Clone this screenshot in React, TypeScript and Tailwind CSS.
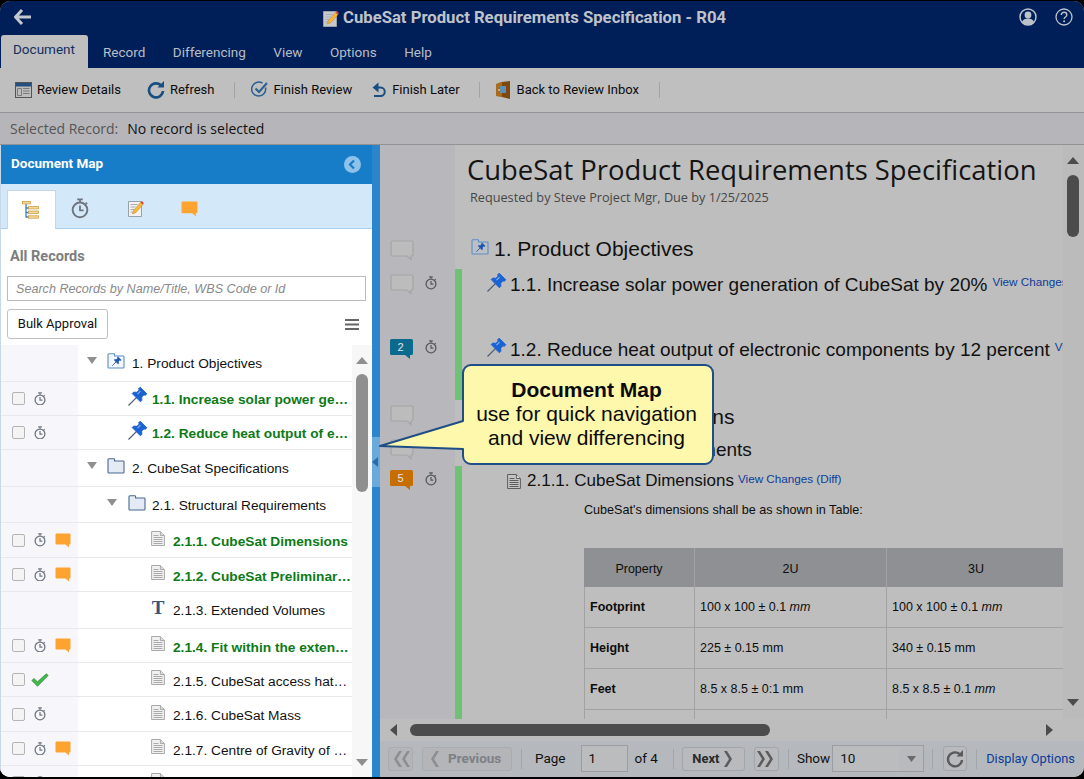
import React from "react";

const sans = "font-['Liberation_Sans',Arial,sans-serif]";
const rob = "font-['Roboto',Arial,sans-serif]";
const open = "font-['Open_Sans','Noto_Sans',sans-serif]";

function Timer({ c = "#6f7680", s = 12 }: { c?: string; s?: number }) {
  return (
    <svg width={s} height={s * 15 / 13} viewBox="0 0 13 15" fill="none" className="shrink-0 block">
      <path d="M4.500 1h4M6.500 1v2M10.600 3.400l1 1" stroke={c} strokeWidth="1.300" />
      <circle cx="6.500" cy="8.600" r="5.300" stroke={c} strokeWidth="1.400" />
      <path d="M6.500 5.500v3.400h2.600" stroke={c} strokeWidth="1.300" />
    </svg>
  );
}
function Orange({ s = 16 }: { s?: number }) {
  return (
    <svg width={s} height={s * 15 / 16} viewBox="0 0 16 15" className="shrink-0 block">
      <path d="M1.500 0.500h13a1 1 0 0 1 1 1v9a1 1 0 0 1-1 1H14v3l-3.500-3H1.500a1 1 0 0 1-1-1v-9a1 1 0 0 1 1-1z" fill="#fda330" />
    </svg>
  );
}
function Pin({ s = 18 }: { s?: number }) {
  return (
    <svg width={s} height={s} viewBox="0 0 18 18" className="shrink-0 block overflow-visible">
      <g transform="translate(9.500 8.500) rotate(45) scale(.85)">
        <path d="M0 1v14" stroke="#4c5c70" strokeWidth="1.400" />
        <path d="M-5.500 -10h11v3H4v4l2.800 2.500V2H-6.800V-.5L-4 -3V-7h-1.500z" fill="#1b62d2" strokeLinejoin="round" stroke="#1b62d2" strokeWidth="1" />
        <path d="M-2 -7v5" stroke="#7fb2f2" strokeWidth="1.400" />
      </g>
    </svg>
  );
}
function Folder({ pin = false, dark = false }: { pin?: boolean; dark?: boolean }) {
  return (
    <svg width="18" height="16" viewBox="0 0 18 16" className="shrink-0 block">
      <path d="M1 3.500V1.600a.8.8 0 0 1 .8-.8h5a.8.8 0 0 1 .8.800v1.400H16.200a.8.8 0 0 1 .8.800v10.400a.8.8 0 0 1-.8.800H1.800a.8.8 0 0 1-.8-.8z" fill={pin ? (dark ? "#bcc0c6" : "#f3f7fc") : "#e4ebf4"} stroke={pin ? "#5b8dc6" : "#48688f"} strokeWidth="1.100" />
      {pin && (
        <g transform="translate(9.500 8.500) rotate(45) scale(.5)">
          <path d="M0 1v11" stroke="#1d55ac" strokeWidth="1.600" />
          <path d="M-5 -9h10v2.500H3.200v3.500l2.800 2.500v2H-6v-2l2.800-2.500v-3.500H-5z" fill="#1d55ac" />
        </g>
      )}
    </svg>
  );
}
function Doc({ dark = false }: { dark?: boolean }) {
  const l = dark ? "#5d5d5d" : "#a9a9a9";
  return (
    <svg width="14" height="15" viewBox="0 0 14 15" className="shrink-0 block">
      <path d="M0.600 0.500h8.800l4 4v10h-12.800z" fill={dark ? "#c4c4c4" : "#f1f1f1"} stroke={l} />
      <path d="M9.400 .500v4h4" fill="#ddd" stroke={l} />
      <path d="M2.500 4.500h5M2.500 6.500h9M2.500 8.500h9M2.500 10.500h9M2.500 12.500h9" stroke={l} />
    </svg>
  );
}
function Check() {
  return (
    <svg width="18" height="14" viewBox="0 0 18 14" className="shrink-0 block">
      <path d="M0.800 7.500L3 5.500l3.400 3.300L15.300 .8 17.200 2.500 6.500 13.300z" fill="#45b84b" stroke="#2c8a36" strokeWidth="0.700" />
    </svg>
  );
}
function TreeIcon() {
  return (
    <svg width="17" height="18" viewBox="0 0 17 18" className="block">
      <path d="M4 3v13.500M4 7h3M4 11.500h3M4 16h3" stroke="#2e7fd0" strokeWidth="1.300" fill="none" />
      <rect x="0.500" y="0.500" width="8" height="2.400" fill="#f4d79a" stroke="#d0a04a" strokeWidth=".8" />
      <rect x="6.500" y="5.500" width="10" height="2.400" fill="#f4d79a" stroke="#d0a04a" strokeWidth=".8" />
      <rect x="6.500" y="10" width="10" height="2.400" fill="#f4d79a" stroke="#d0a04a" strokeWidth=".8" />
      <rect x="6.500" y="14.800" width="10" height="2.400" fill="#f4d79a" stroke="#d0a04a" strokeWidth=".8" />
    </svg>
  );
}
function NoteIcon({ s = 16, dim = false }: { s?: number; dim?: boolean }) {
  return (
    <svg width={s} height={s * 17 / 16} viewBox="0 0 16 17" className="block">
      <path d="M.500 1.500h13v15h-13z" fill={dim ? "#c9c9c9" : "#f2f2f2"} stroke="#98a0a8" />
      <path d="M2.500 4.500h7M2.500 7h5M2.500 9.500h4M2.500 12h3" stroke="#aab" />
      <path d="M4.500 14l1-3.500 7-8 2.500 2-7 8z" fill="#f4b93a" stroke="#c08020" strokeWidth="0.500" />
      <path d="M12.500 2.500l2.500 2 .8-1.500-1.800-2z" fill="#d64545" />
    </svg>
  );
}
function TriDown() {
  return <svg width="10" height="7" viewBox="0 0 10 7" className="shrink-0 block"><path d="M0 0h10L5 7z" fill="#8f8f8f" /></svg>;
}
function Bubble({ n, bg }: { n?: string; bg?: string }) {
  if (!n)
    return (
      <svg width="24" height="21" viewBox="0 0 24 21" fill="none" className="shrink-0 block">
        <path d="M2.500 1h19a1.500 1.500 0 0 1 1.500 1.500v12a1.500 1.500 0 0 1-1.500 1.500H21v3.500L17 16H2.500A1.500 1.500 0 0 1 1 14.500v-12A1.500 1.500 0 0 1 2.500 1z" stroke="#a4a4a4" strokeWidth="1.200" fill="#bcbcbc" />
      </svg>
    );
  return (
    <div className="relative w-[23px] h-[20px] shrink-0">
      <svg width="23" height="20" viewBox="0 0 23 20" className="block">
        <path d="M1.500 0h20a1.500 1.500 0 0 1 1.500 1.500v13a1.500 1.500 0 0 1-1.500 1.500H20v4l-5-4H1.500A1.500 1.500 0 0 1 0 14.500v-13A1.500 1.500 0 0 1 1.500 0z" fill={bg} />
      </svg>
      <span className={`absolute left-0 right-[2px] top-[1px] text-center text-[11px] leading-[14px] text-[#e4e4e4] ${sans}`}>{n}</span>
    </div>
  );
}

type Row = { h: string; pad: string; tri?: string; icon: React.ReactNode; text: string; bold?: boolean; left?: React.ReactNode; chk?: boolean; gapc?: string; gap: string; tm?: string };
const cb = <span className="block w-[13px] h-[13px] rounded-[2px] border border-[#b4b4b4] bg-[#f4f4f4] shrink-0" />;
const T = <span className="block font-['Liberation_Serif',serif] font-bold text-[19px] leading-[16px] text-[#35557f] w-[14px] text-center shrink-0">T</span>;
const rows: Row[] = [
  { h: "h-[37px]", pad: "pl-[9px]", tri: "mr-[10px]", gap: "ml-[7px]", tm: "mt-[2px]", icon: <Folder pin />, text: "1. Product Objectives" },
  { h: "h-[34px]", pad: "pl-[50px]", gap: "ml-[6px]", tm: "mt-[4px]", icon: <Pin />, text: "1.1. Increase solar power generation of CubeSat by 20%", bold: true, chk: true },
  { h: "h-[34px]", pad: "pl-[50px]", gap: "ml-[6px]", tm: "mt-[4px]", icon: <Pin />, text: "1.2. Reduce heat output of electronic components", bold: true, chk: true },
  { h: "h-[37px]", pad: "pl-[9px]", tri: "mr-[10px]", gap: "ml-[7px]", tm: "mt-[2px]", icon: <Folder />, text: "2. CubeSat Specifications" },
  { h: "h-[36px]", pad: "pl-[29px]", tri: "mr-[11px]", gap: "ml-[6px]", tm: "mt-[4px]", icon: <Folder />, text: "2.1. Structural Requirements" },
  { h: "h-[35px]", pad: "pl-[73px]", gap: "ml-[8px]", tm: "mt-[4px]", icon: <Doc />, text: "2.1.1. CubeSat Dimensions", bold: true, chk: true, left: <Orange /> },
  { h: "h-[34px]", pad: "pl-[73px]", gap: "ml-[8px]", tm: "mt-[6px]", icon: <Doc />, text: "2.1.2. CubeSat Preliminary Design Review", bold: true, chk: true, left: <Orange /> },
  { h: "h-[37px]", pad: "pl-[73px]", gap: "ml-[8px]", tm: "mt-[2px]", icon: T, text: "2.1.3. Extended Volumes" },
  { h: "h-[34px]", pad: "pl-[73px]", gap: "ml-[8px]", tm: "mt-[6px]", icon: <Doc />, text: "2.1.4. Fit within the extended volumes", bold: true, chk: true, left: <Orange /> },
  { h: "h-[34px]", pad: "pl-[73px]", gap: "ml-[8px]", tm: "mt-[6px]", icon: <Doc />, text: "2.1.5. CubeSat access hatch design", chk: true, gapc: "check" },
  { h: "h-[35px]", pad: "pl-[73px]", gap: "ml-[8px]", tm: "mt-[4px]", icon: <Doc />, text: "2.1.6. CubeSat Mass", chk: true },
  { h: "h-[34px]", pad: "pl-[73px]", gap: "ml-[8px]", tm: "mt-[6px]", icon: <Doc />, text: "2.1.7. Centre of Gravity of CubeSat", chk: true, left: <Orange /> },
  { h: "h-[34px]", pad: "pl-[73px]", gap: "ml-[8px]", tm: "mt-[4px]", icon: <Doc />, text: "2.1.8. Materials", chk: true },
];

function Sep() {
  return <span className="block w-px h-[16px] bg-[#a3a3a3] shrink-0" />;
}
function Bsep() {
  return <span className="block w-px h-[20px] bg-[#a2a5a9] shrink-0" />;
}

function Chev({ dbl = false, dir = "l", c }: { dbl?: boolean; dir?: string; c: string }) {
  const one = dir === "l" ? "M7 1L2 9l5 8h3L5 9l5-8z" : "M3 1l5 8-5 8H0l5-8-5-8z";
  return (
    <svg width={dbl ? 18 : 10} height="18" viewBox={`0 0 ${dbl ? 18 : 10} 18`} className="block shrink-0">
      <path d={one} fill={c} />
      {dbl && <path d={one} fill={c} transform="translate(8 0)" />}
    </svg>
  );
}

const cellB = "border-r border-b border-[#a2a2a2]";
const tbl: [string, React.ReactNode, React.ReactNode][] = [
  ["Footprint", <span>100 x 100 ± 0.1 <i>mm</i></span>, <span>100 x 100 ± 0.1 <i>mm</i></span>],
  ["Height", "225 ± 0.15 mm", "340 ± 0.15 mm"],
  ["Feet", "8.5 x 8.5 ± 0:1 mm", <span>8.5 x 8.5 ± 0.1 <i>mm</i></span>],
];

function Gut({ b, t = false, pt = "pt-[5px]", tm = "mt-[2px]" }: { b?: React.ReactNode; t?: boolean; pt?: string; tm?: string }) {
  return (
    <div className={`w-[75px] shrink-0 bg-[#b8b7bc] flex items-start ${pt} pl-[10px]`}>
      <div className="w-[23px]">{b}</div>
      {t && <div className={`ml-[12px] ${tm}`}><Timer c="#555a60" /></div>}
    </div>
  );
}

export default function App() {
  return (
    <div className={`w-[1084px] h-[779px] bg-black overflow-hidden relative ${sans}`}>
      <div className="mt-px h-[776px] rounded-[10px] overflow-hidden flex flex-col bg-[#bebebe] relative">
        {/* header */}
        <div className="h-[67px] bg-[#001f59] shrink-0 flex flex-col">
          <div className="h-[34px] flex items-center relative">
            <svg width="18" height="16" viewBox="0 0 18 16" className="ml-[14px] -mt-[2px]">
              <path d="M8 1L1.500 8 8 15M2 8h15" stroke="#c4c8ce" strokeWidth="3" fill="none" />
            </svg>
            <div className={`absolute left-[323px] top-[8px] flex items-center gap-[4px] text-[16.700px] font-bold text-[#bfc3c9] ${rob}`}>
              <NoteIcon dim />
              <span className="leading-[18px] whitespace-nowrap">CubeSat Product Requirements Specification - R04</span>
            </div>
            <div className="ml-auto flex items-center gap-[18px] pr-[11px] -mt-[3px]">
              <svg width="18" height="18" viewBox="0 0 18 18">
                <circle cx="9" cy="9" r="8" fill="#001f59" stroke="#bcc2c9" strokeWidth="1.500" />
                <circle cx="9" cy="7" r="3.400" fill="#bcc2c9" />
                <path d="M2.800 14c1.200-2.500 3.500-3.500 6.200-3.500s5 1 6.200 3.500a8 8 0 0 1-12.400 0z" fill="#bcc2c9" />
              </svg>
              <svg width="18" height="18" viewBox="0 0 18 18" fill="none">
                <circle cx="9" cy="9" r="8" stroke="#bcc2c9" strokeWidth="1.300" />
                <path d="M6.300 7c0-1.700 1.200-2.700 2.800-2.700S11.800 5.300 11.800 6.900c0 2-2.700 2.100-2.700 4.100" stroke="#bcc2c9" strokeWidth="1.400" />
                <circle cx="9.100" cy="13.200" r="1" fill="#bcc2c9" />
              </svg>
            </div>
          </div>
          <div className={`h-[33px] flex items-stretch text-[13.500px] text-[#b9bdc4] ${rob}`}>
            <div className="ml-px w-[87px] bg-[#bfbfbf] rounded-t-[3px] text-[#12305f] flex items-center pl-[12px] pb-[4px]">Document</div>
            <div className="flex items-center gap-[27.500px] pl-[15px] pt-[1px]">
              <span>Record</span><span>Differencing</span><span>View</span><span>Options</span><span>Help</span>
            </div>
          </div>
        </div>
        {/* toolbar */}
        <div className={`h-[45px] shrink-0 bg-[#bfbfbf] border-b border-[#929292] flex items-center text-[13px] text-[#0b0b0b] pl-[15px] pb-[1px] ${rob}`}>
          <svg width="17" height="16" viewBox="0 0 17 16" className="mr-[5px]">
            <rect x=".5" y=".5" width="16" height="15" fill="#bdbdbd" stroke="#555" />
            <rect x="1" y="1" width="15" height="3.500" fill="#27507f" />
            <path d="M2.500 6.500h4v7h-4zM8 6.500h6.500M8 9h6.500M8 11.500h6.500" stroke="#7a7a7a" fill="none" />
          </svg>
          <span>Review Details</span>
          <svg width="18" height="18" viewBox="0 0 18 18" className="ml-[26px] mr-[5px]" fill="none">
            <path d="M14.500 5A7 7 0 1 0 16 10" stroke="#184e80" strokeWidth="2.600" />
            <path d="M10.500 6.500h6.500V0z" fill="#184e80" />
          </svg>
          <span>Refresh</span>
          <span className="ml-[20px] mr-[16px]"><Sep /></span>
          <svg width="17" height="17" viewBox="0 0 17 17" className="mr-[5px]" fill="none">
            <path d="M14.500 6.500A7 7 0 1 1 11.500 2.200" stroke="#2a5f93" strokeWidth="1.500" />
            <path d="M4.500 7.500l3.500 3.500 8-9" stroke="#2a5f93" strokeWidth="2" />
          </svg>
          <span>Finish Review</span>
          <svg width="14" height="16" viewBox="0 0 14 16" className="ml-[20px] mr-[6px]" fill="none">
            <path d="M2.500 5.500h6a4 4 0 0 1 0 8.500H2" stroke="#184e80" strokeWidth="2" />
            <path d="M6.500 0.500v10L0.500 5.500z" fill="#184e80" />
          </svg>
          <span>Finish Later</span>
          <span className="ml-[19px] mr-[16px]"><Sep /></span>
          <svg width="15" height="18" viewBox="0 0 15 18" className="mr-[6px]">
            <path d="M0 3l5-2h9v15H5l-5-1z" fill="#a96b1c" />
            <path d="M6 1l8-1v18l-8-2z" fill="#7c4a10" />
            <rect x="4" y="5" width="6" height="7" fill="#5f8fb8" />
            <circle cx="3" cy="9" r="1" fill="#e9c265" />
          </svg>
          <span>Back to Review Inbox</span>
          <span className="ml-[20px]"><Sep /></span>
        </div>
        {/* selected */}
        <div className={`h-[32px] shrink-0 bg-[#b6b5ba] border-b border-[#929292] flex items-center pl-[10px] text-[14px] ${open}`}>
          <span className="text-[#555]">Selected Record:</span>
          <span className="ml-[9px] text-[#111]">No record is selected</span>
        </div>
        {/* main */}
        <div className="flex-1 flex min-h-0">
          {/* left */}
          <div className="w-[372px] shrink-0 bg-white flex flex-col overflow-hidden border-l border-[#c8d8e6]">
            <div className={`h-[39px] shrink-0 bg-[#187dc9] flex items-center pl-[10px] pr-[11px] pb-[2px] text-white text-[13.500px] font-bold ${rob}`}>
              <span>Document Map</span>
              <svg width="17" height="17" viewBox="0 0 17 17" className="ml-auto mt-[2px]">
                <circle cx="8.500" cy="8.500" r="8.500" fill="#8fc2ea" />
                <path d="M10 4.500L6 8.500l4 4" stroke="#187dc9" strokeWidth="2.200" fill="none" />
              </svg>
            </div>
            <div className="h-[45px] shrink-0 bg-[#d3e8f8] border-b border-[#a9d0ec] flex items-end pl-[6px]">
              <div className="w-[49px] h-[39px] bg-white border border-b-0 border-[#c6d6e4] flex items-center justify-center pr-[3px] -mb-px"><TreeIcon /></div>
              <div className="w-[48px] h-[39px] flex items-center justify-center"><Timer s={18} /></div>
              <div className="w-[64px] h-[39px] flex items-center justify-center"><NoteIcon s={16} /></div>
              <div className="w-[42px] h-[39px] flex items-center justify-center"><Orange s={17} /></div>
            </div>
            <div className={`shrink-0 pl-[9px] mt-[20px] text-[14.500px] leading-[16px] font-bold text-[#7d7d7d] ${rob}`}>All Records</div>
            <div className="mx-[6px] mt-[11px] h-[25px] shrink-0 border border-[#bcbcbc] flex items-center pl-[8px] pt-[2px] italic text-[12.600px] text-[#8a8a8a]">
              Search Records by Name/Title, WBS Code or Id
            </div>
            <div className="mt-[8px] shrink-0 flex items-center pl-[6px] pr-[13px]">
              <div className={`h-[30px] w-[101px] border border-[#c0c0c0] rounded-[3px] flex items-center justify-center text-[13px] text-[#111] ${rob}`}>Bulk Approval</div>
              <svg width="14" height="11" viewBox="0 0 14 11" className="ml-auto"><path d="M0 1h14M0 5.500h14M0 10h14" stroke="#666" strokeWidth="1.800" /></svg>
            </div>
            <div className="mt-[6px] flex-1 flex min-h-0 overflow-hidden">
              <div className="flex-1 min-w-0">
                {rows.map((r, i) => (
                  <div key={i} className={`${r.h} flex`}>
                    <div className="w-[77px] shrink-0 bg-[#f6f6fb] border-b border-[#e9e9e9] flex items-center pl-[11px]">
                      {r.chk && cb}
                      {r.chk && (r.gapc === "check" ? <span className="ml-[6px]"><Check /></span> : <span className="ml-[9px]"><Timer /></span>)}
                      {r.left && <span className="ml-[9px]">{r.left}</span>}
                    </div>
                    <div className={`flex-1 min-w-0 border-b border-[#e9e9e9] flex items-center ${r.pad}`}>
                      {r.tri && <span className={`${r.tri} -mt-[5px]`}><TriDown /></span>}
                      <span className="-mt-[4px]">{r.icon}</span>
                      <span className={`truncate ${r.gap} ${r.tm ?? ""} ${r.bold ? "text-[13.700px] font-bold text-[#0d7a17]" : "text-[13.700px] text-[#111]"}`}>{r.text}</span>
                    </div>
                  </div>
                ))}
              </div>
              <div className="w-[20px] shrink-0 bg-[#f7f7f7] flex flex-col items-center relative">
                <svg width="12" height="7" viewBox="0 0 12 7" className="mt-[12px]"><path d="M0 7h12L6 0z" fill="#8f8f8f" /></svg>
                <div className="w-[12px] h-[118px] rounded-[6px] bg-[#8f8f8f] mt-[10px]" />
                <svg width="12" height="7" viewBox="0 0 12 7" className="mt-auto mb-[11px]"><path d="M0 0h12L6 7z" fill="#8f8f8f" /></svg>
              </div>
            </div>
          </div>
          {/* splitter */}
          <div className="w-[8px] shrink-0 bg-[#2a85cc] flex flex-col">
            <div className="mt-[292px] h-[50px] bg-[#69a9dc] flex items-center">
              <svg width="6" height="10" viewBox="0 0 6 10"><path d="M6 0v10L0 5z" fill="#2a6cab" /></svg>
            </div>
          </div>
          {/* right */}
          <div className="flex-1 min-w-0 flex flex-col">
            <div className="flex-1 min-h-0 flex">
              <div className="flex-1 min-w-0 overflow-hidden flex flex-col bg-[#bebebe]">
                <div className="h-[90px] shrink-0 flex">
                  <Gut />
                  <div className={`pl-[12px] pt-[8px] whitespace-nowrap ${open}`}>
                    <div className="text-[27.400px] leading-[34px] text-[#141414]">CubeSat Product Requirements Specification</div>
                    <div className="pl-[3px] text-[12.700px] leading-[20px] text-[#474747]">Requested by Steve Project Mgr, Due by 1/25/2025</div>
                  </div>
                </div>
                <div className="h-[34px] shrink-0 flex">
                  <Gut b={<Bubble />} />
                  <div className="pl-[16px] pt-[2px] flex items-start whitespace-nowrap text-[#111]">
                    <span className="mt-[2px]"><Folder pin dark /></span>
                    <span className="ml-[5px] text-[21px] leading-[24px]">1. Product Objectives</span>
                  </div>
                </div>
                <div className="h-[65px] shrink-0 flex">
                  <Gut b={<Bubble />} t />
                  <div className="w-[7px] shrink-0 bg-[#6fc175]" />
                  <div className="pl-[26px] pt-[5px] flex items-start whitespace-nowrap text-[#111]">
                    <span className="-ml-px"><Pin /></span>
                    <span className="ml-[5px] mt-[1px] text-[19px] leading-[20px]">1.1. Increase solar power generation of CubeSat by 20%</span>
                    <span className="ml-[5px] -mt-[1px] text-[11.700px] leading-[18px] text-[#0a3d99]">View Changes (Diff)</span>
                  </div>
                </div>
                <div className="h-[66px] shrink-0 flex">
                  <Gut b={<Bubble n="2" bg="#0c6a8e" />} t tm="mt-[1px]" />
                  <div className="w-[7px] shrink-0 bg-[#6fc175]" />
                  <div className="pl-[26px] pt-[5px] flex items-start whitespace-nowrap text-[#111]">
                    <span className="-ml-px"><Pin /></span>
                    <span className="ml-[5px] mt-[1px] text-[19px] leading-[20px]">1.2. Reduce heat output of electronic components by 12 percent</span>
                    <span className="ml-[5px] -mt-[1px] text-[11.700px] leading-[18px] text-[#0a3d99]">View Changes (Diff)</span>
                  </div>
                </div>
                <div className="h-[34px] shrink-0 flex">
                  <Gut b={<Bubble />} />
                  <div className="pl-[39px] pt-[5px] whitespace-nowrap text-[21px] leading-[24px] text-[#111]">2. CubeSat Specifications</div>
                </div>
                <div className="h-[32px] shrink-0 flex">
                  <Gut b={<Bubble />} />
                  <div className="pl-[55px] pt-[5px] whitespace-nowrap text-[19px] leading-[22px] text-[#111]">2.1. Structural Requirements</div>
                </div>
                <div className="flex-1 min-h-0 flex overflow-hidden">
                  <Gut b={<Bubble n="5" bg="#c66f00" />} t pt="pt-[4px]" />
                  <div className="w-[7px] shrink-0 bg-[#6fc175]" />
                  <div className="flex-1 min-w-0 overflow-hidden">
                    <div className="pl-[45px] pt-[5px] flex items-center whitespace-nowrap">
                      <Doc dark />
                      <span className="ml-[6px] text-[17px] leading-[20px] text-[#111]">2.1.1. CubeSat Dimensions</span>
                      <span className="ml-[4px] -mt-[5px] text-[11.700px] leading-[18px] text-[#0a3d99]">View Changes (Diff)</span>
                    </div>
                    <div className="pl-[122px] mt-[11px] text-[12.600px] leading-[16px] text-[#0d0d0d] whitespace-nowrap">CubeSat's dimensions shall be as shown in Table:</div>
                    <div className="ml-[122px] mt-[30px] w-[700px] text-[12.500px] text-[#0d0d0d]">
                      <div className="flex h-[39px] bg-[#8e9093] text-center items-stretch pt-[3px]">
                        <div className="w-[111px] border-r border-[#a2a2a2] flex items-center justify-center -mt-[3px] pt-[3px]">Property</div>
                        <div className="w-[192px] border-r border-[#a2a2a2] flex items-center justify-center -mt-[3px] pt-[3px]">2U</div>
                        <div className="w-[178px] flex items-center justify-center">3U</div>
                      </div>
                      {tbl.map((r, i) => (
                        <div key={i} className="flex h-[41px] items-stretch">
                          <div className={`w-[111px] ${cellB} border-l flex items-center pl-[5px] font-bold`}>{r[0]}</div>
                          <div className={`w-[192px] ${cellB} flex items-center pl-[5px]`}>{r[1]}</div>
                          <div className="w-[397px] border-b border-[#a2a2a2] flex items-center pl-[5px]">{r[2]}</div>
                        </div>
                      ))}
                      <div className="flex h-[41px] items-stretch">
                        <div className="w-[111px] border-l border-r border-[#a2a2a2]" />
                        <div className="w-[192px] border-r border-[#a2a2a2]" />
                      </div>
                    </div>
                  </div>
                </div>
              </div>
              {/* v scrollbar */}
              <div className="w-[21px] shrink-0 bg-[#bbbbbb] flex flex-col items-center">
                <svg width="12" height="7" viewBox="0 0 12 7" className="mt-[12px] mr-[2px]"><path d="M0 7h12L6 0z" fill="#4c4c4c" /></svg>
                <div className="w-[12px] h-[62px] rounded-[6px] bg-[#4c4c4c] mt-[11px] mr-[2px]" />
                <svg width="12" height="7" viewBox="0 0 12 7" className="mt-auto mb-[13px] mr-[2px]"><path d="M0 0h12L6 7z" fill="#4c4c4c" /></svg>
              </div>
            </div>
            {/* h scrollbar */}
            <div className="h-[22px] shrink-0 bg-[#bdbdbd] flex items-center pl-[10px] pr-[31px]">
              <svg width="7" height="12" viewBox="0 0 7 12"><path d="M7 0v12L0 6z" fill="#4c4c4c" /></svg>
              <div className="ml-[13px] w-[360px] h-[12px] rounded-[6px] bg-[#4c4c4c]" />
              <svg width="7" height="12" viewBox="0 0 7 12" className="ml-auto"><path d="M0 0v12l7-6z" fill="#4c4c4c" /></svg>
            </div>
            {/* pager */}
            <div className={`h-[36px] shrink-0 bg-[#b5b8bc] flex items-center pl-[8px] pb-[1px] text-[13.500px] text-[#111] ${rob}`}>
              <div className="w-[25px] h-[24px] rounded-[3px] border border-[#a9acb0] bg-[#b3b5b8] flex items-center justify-center"><Chev dbl c="#8b8e92" /></div>
              <div className="ml-[9px] w-[90px] h-[24px] rounded-[3px] border border-[#a9acb0] bg-[#b3b5b8] flex items-center pl-[6px] gap-[9px] text-[13.500px] font-bold text-[#7d8085]"><Chev c="#8b8e92" />Previous</div>
              <span className="ml-[9px]"><Bsep /></span>
              <span className="ml-[13px]">Page</span>
              <div className="ml-[15px] w-[47px] h-[27px] border border-[#9a9da1] bg-[#bbbcbe] flex items-center pl-[7px]">1</div>
              <span className="ml-[7px]">of 4</span>
              <span className="ml-[15px]"><Bsep /></span>
              <div className="ml-[8px] w-[63px] h-[24px] rounded-[3px] border border-[#a2a5a9] bg-[#b8babd] flex items-center justify-center gap-[5px] text-[13px] font-bold text-[#2a2a2a]">Next<Chev dir="r" c="#5c5c5c" /></div>
              <div className="ml-[9px] w-[25px] h-[24px] rounded-[3px] border border-[#a2a5a9] bg-[#b8babd] flex items-center justify-center"><Chev dbl dir="r" c="#5c5c5c" /></div>
              <span className="ml-[9px]"><Bsep /></span>
              <span className="ml-[8px]">Show</span>
              <div className="ml-[2px] w-[92px] h-[27px] border border-[#9a9da1] bg-[#bbbcbe] flex items-center pl-[7px]">
                10
                <span className="ml-auto w-[24px] h-full bg-[#b8babd] flex items-center justify-center">
                  <svg width="9" height="6" viewBox="0 0 9 6"><path d="M0 0h9L4.500 6z" fill="#6b6b6b" /></svg>
                </span>
              </div>
              <span className="ml-[8px]"><Bsep /></span>
              <div className="ml-[10px] w-[24px] h-[25px] rounded-[3px] border border-[#a2a5a9] bg-[#b8babd] flex items-center justify-center">
                <svg width="18" height="18" viewBox="0 0 18 18" fill="none">
                  <path d="M14.500 5A7 7 0 1 0 16 10" stroke="#5a5a5a" strokeWidth="2.400" />
                  <path d="M10.500 6.500h6.500V0z" fill="#5a5a5a" />
                </svg>
              </div>
              <span className="ml-[9px]"><Bsep /></span>
              <span className="ml-[9px] text-[12.800px] text-[#0a3d99] whitespace-nowrap">Display Options</span>
            </div>
          </div>
        </div>
        {/* callout overlay */}
        <svg width="340" height="110" viewBox="0 0 340 110" className="absolute left-[375px] top-[359px]">
          <path d="M96 5h234a8 8 0 0 1 8 8v83a8 8 0 0 1-8 8H96a8 8 0 0 1-8-8V89L5 86 88 61V13a8 8 0 0 1 8-8z" fill="#fdf8ab" stroke="#1f4e86" strokeWidth="2" strokeLinejoin="round" />
        </svg>
        <div className="absolute left-[462px] top-[377px] w-[249px] text-center text-[21px] leading-[24px] text-[#0a0a0a] whitespace-nowrap">
          <div className="font-bold">Document Map</div>
          <div>use for quick navigation</div>
          <div>and view differencing</div>
        </div>
      </div>
    </div>
  );
}
